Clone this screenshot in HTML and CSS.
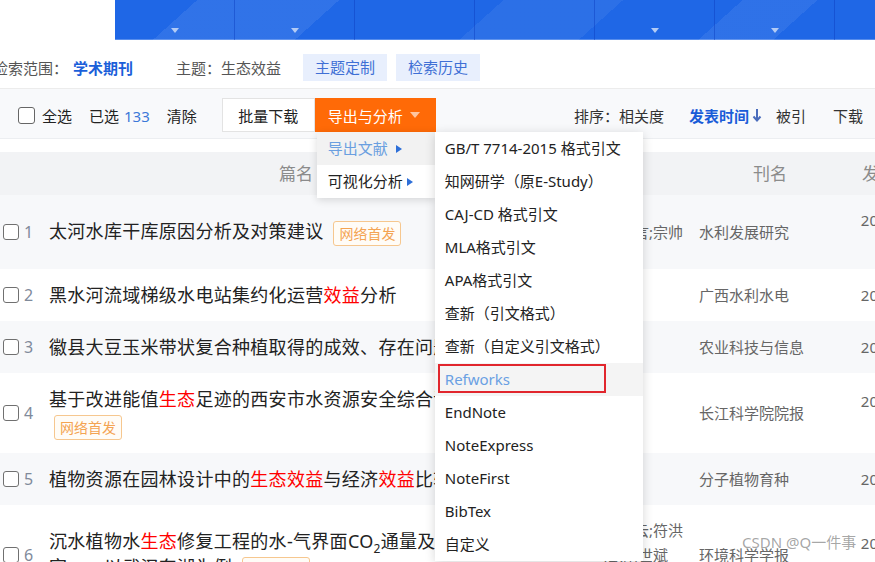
FILE: index.html
```html
<!DOCTYPE html>
<html lang="zh-CN">
<head>
<meta charset="utf-8">
<title>检索结果</title>
<link rel="stylesheet" href="styles.css">
</head>
<body>
<div class="topnav">
  <div class="seg"><span class="caret"></span></div>
  <div class="seg"><span class="caret"></span></div>
  <div class="seg"></div>
  <div class="seg"></div>
  <div class="seg"><span class="caret"></span></div>
  <div class="seg"><span class="caret"></span></div>
  <div class="seg"></div>
</div>

<div class="search-row">
  <span class="label">检索范围：</span><span class="scope">学术期刊</span>
  <span class="topic">主题：生态效益</span>
  <span class="chip">主题定制</span>
  <span class="chip chip-2">检索历史</span>
</div>

<div class="toolbar">
  <span class="cb"></span><span class="selall">全选</span>
  <span class="sel">已选<span class="count">133</span></span>
  <span class="clear">清除</span>
  <span class="btn-batch">批量下载</span>
  <div class="btn-export">
    <span>导出与分析</span>
    <svg class="exp-caret" width="10" height="6" viewBox="0 0 10 6"><path d="M0 0H10L5 6Z" fill="rgba(255,255,255,0.62)"/></svg>
    <div class="menu1">
      <div class="m1-item active">导出文献 <span class="tri"></span>
        <div class="menu2">
          <div class="m2-item">GB/T 7714-2015 格式引文</div>
          <div class="m2-item">知网研学（原E-Study）</div>
          <div class="m2-item">CAJ-CD 格式引文</div>
          <div class="m2-item">MLA格式引文</div>
          <div class="m2-item">APA格式引文</div>
          <div class="m2-item">查新（引文格式）</div>
          <div class="m2-item">查新（自定义引文格式）</div>
          <div class="m2-item hover">Refworks<span class="mark"></span></div>
          <div class="m2-item">EndNote</div>
          <div class="m2-item">NoteExpress</div>
          <div class="m2-item">NoteFirst</div>
          <div class="m2-item">BibTex</div>
          <div class="m2-item">自定义</div>
        </div>
      </div>
      <div class="m1-item">可视化分析<span class="tri"></span></div>
    </div>
  </div>
  <div class="sort">
    <span>排序：相关度</span>
    <span class="sort-on">发表时间</span>
    <svg class="sort-arrow" width="10" height="14" viewBox="0 0 10 14"><path d="M5 1V12M1.5 8.5L5 12.5L8.5 8.5" fill="none" stroke="#4a6cbc" stroke-width="2"/></svg>
    <span class="sort-cite">被引</span>
    <span class="sort-dl">下载</span>
  </div>
</div>

<div class="table">
  <div class="thead">
    <div></div>
    <div class="th-title">篇名</div>
    <div></div>
    <div class="th-journal">刊名</div>
    <div class="th-date">发表时间</div>
  </div>

  <div class="row alt">
    <div class="c-check"><span class="cb cb-row"></span><span class="num">1</span></div>
    <div class="c-title">太河水库干库原因分析及对策建议 <span class="tag">网络首发</span></div>
    <div class="c-author"><span class="au">李可言</span><span class="au">;宗帅</span></div>
    <div class="c-journal">水利发展研究</div>
    <div class="c-date">2023-03-06 15:20</div>
  </div>

  <div class="row">
    <div class="c-check"><span class="cb cb-row"></span><span class="num">2</span></div>
    <div class="c-title">黑水河流域梯级水电站集约化运营<em class="hl">效益</em>分析</div>
    <div class="c-author"><span class="au">王强</span></div>
    <div class="c-journal">广西水利水电</div>
    <div class="c-date">2023-03-01</div>
  </div>

  <div class="row alt">
    <div class="c-check"><span class="cb cb-row"></span><span class="num">3</span></div>
    <div class="c-title">徽县大豆玉米带状复合种植取得的成效、存在问题及建议</div>
    <div class="c-author"><span class="au">李娜</span></div>
    <div class="c-journal">农业科技与信息</div>
    <div class="c-date">2023-02-28</div>
  </div>

  <div class="row">
    <div class="c-check"><span class="cb cb-row"></span><span class="num">4</span></div>
    <div class="c-title">基于改进能值<em class="hl">生态</em>足迹的西安市水资源安全综合评价及预测 <span class="tag">网络首发</span></div>
    <div class="c-author"><span class="au">刘洋</span></div>
    <div class="c-journal">长江科学院院报</div>
    <div class="c-date">2023-02-27 16:08</div>
  </div>

  <div class="row alt">
    <div class="c-check"><span class="cb cb-row"></span><span class="num">5</span></div>
    <div class="c-title">植物资源在园林设计中的<em class="hl">生态效益</em>与经济<em class="hl">效益</em>比较分析</div>
    <div class="c-author"><span class="au">陈静</span></div>
    <div class="c-journal">分子植物育种</div>
    <div class="c-date">2023-02-25</div>
  </div>

  <div class="row">
    <div class="c-check"><span class="cb cb-row"></span><span class="num">6</span></div>
    <div class="c-title">沉水植物水<em class="hl">生态</em>修复工程的水-气界面CO<sub>2</sub>通量及其影响因素研究——以武汉东湖为例 <span class="tag">网络首发</span></div>
    <div class="c-author"><span class="au">张德云</span><span class="au">;符洪</span><span class="au">;欧阳世斌</span><span class="au">;王强</span></div>
    <div class="c-journal">环境科学学报</div>
    <div class="c-date">2023-02-24 10:35</div>
  </div>
</div>

<div class="watermark">CSDN @Q一件事</div>
</body>
</html>
```

FILE: styles.css
```css
html, body {
  margin: 0;
  padding: 0;
  overflow: hidden;
}
body {
  width: 875px;
  height: 562px;
  position: relative;
  background: #fff;
  color: #222;
  font-family: "Noto Sans", "Noto Sans CJK SC", sans-serif;
}

/* top blue navigation */
.topnav {
  margin-left: 115px;
  height: 40px;
  display: flex;
  background-color: #1f67e6;
  background-image: linear-gradient(138deg,
    rgba(255,255,255,0) 0 55px,
    rgba(255,255,255,0.08) 55px 150px,
    rgba(255,255,255,0) 150px 260px,
    rgba(255,255,255,0.06) 260px 340px,
    rgba(255,255,255,0) 340px 420px,
    rgba(255,255,255,0.07) 420px 470px,
    rgba(255,255,255,0) 470px);
  box-shadow: inset 0 -1px 0 rgba(255,255,255,0.25);
}
.seg {
  flex: 0 0 120px;
  box-sizing: border-box;
  border-right: 1px solid rgba(10, 60, 190, 0.45);
  display: flex;
  justify-content: center;
  align-items: flex-end;
  padding-bottom: 7px;
}
.caret {
  width: 0;
  height: 0;
  border-left: 4.5px solid transparent;
  border-right: 4.5px solid transparent;
  border-top: 5px solid #b3cbf5;
}

/* search scope row */
.search-row {
  display: flex;
  align-items: center;
  margin-left: -7px;
  padding: 14px 0 7px;
  height: 27px;
  border-bottom: 1px solid #ececec;
  font-size: 15px;
}
.label { color: #555; }
.scope {
  margin-left: 5px;
  color: #1b5fd9;
  font-weight: bold;
}
.topic {
  margin-left: 43px;
  color: #555;
}
.chip {
  margin-left: 22px;
  padding: 0 12px;
  line-height: 27px;
  background: #e8effd;
  color: #3f6fd5;
}
.chip-2 { margin-left: 9px; }

/* toolbar */
.toolbar {
  display: flex;
  align-items: center;
  height: 34px;
  padding: 9px 12px 6px 18px;
  background: #f8f9fb;
  border-bottom: 1px solid #eceef1;
  font-size: 15px;
  color: #222;
}
.cb {
  display: inline-block;
  width: 17px;
  height: 17px;
  box-sizing: border-box;
  border: 1.5px solid #666;
  border-radius: 3px;
  background: #fff;
  flex: none;
}
.selall { margin-left: 7px; }
.sel { margin-left: 17px; }
.count {
  margin-left: 5px;
  color: #3c78d8;
}
.clear { margin-left: 17px; }
.btn-batch {
  margin-left: 25px;
  width: 93px;
  height: 34px;
  box-sizing: border-box;
  border: 1px solid #e3e3e3;
  background: #fff;
  display: flex;
  align-items: center;
  justify-content: center;
}
.btn-export {
  position: relative;
  width: 121px;
  height: 34px;
  box-sizing: border-box;
  padding-left: 13px;
  background: #ff6a07;
  color: #fff;
  display: flex;
  align-items: center;
}
.exp-caret { margin-left: 7px; }

/* dropdown menus */
.menu1 {
  position: absolute;
  top: 34px;
  left: 2px;
  width: 118px;
  background: #fff;
  box-shadow: 0 2px 8px rgba(0,0,0,0.14);
  z-index: 10;
}
.m1-item {
  position: relative;
  height: 33px;
  line-height: 33px;
  padding-left: 11px;
  color: #222;
  font-size: 15px;
}
.m1-item.active {
  background: #f2f2f2;
  color: #6a9fe0;
}
.tri {
  display: inline-block;
  width: 0;
  height: 0;
  margin-left: 4px;
  border-top: 4px solid transparent;
  border-bottom: 4px solid transparent;
  border-left: 6px solid #2d6fd8;
  vertical-align: 1px;
}
.menu2 {
  position: absolute;
  top: 0;
  left: 118px;
  width: 208px;
  background: #fff;
  box-shadow: 0 2px 10px rgba(0,0,0,0.16);
  z-index: 11;
}
.m2-item {
  position: relative;
  height: 33px;
  line-height: 33px;
  padding-left: 10px;
  font-size: 15px;
  color: #222;
  white-space: nowrap;
}
.m2-item.hover {
  background: #f4f4f4;
  color: #6aa0e3;
}
.mark {
  position: absolute;
  left: 3px;
  top: 1px;
  width: 168px;
  height: 29px;
  box-sizing: border-box;
  border: 2px solid #e1262d;
}

/* sort */
.sort {
  margin-left: auto;
  display: flex;
  align-items: center;
  color: #333;
}
.sort-on {
  margin-left: 25px;
  color: #1a5cd8;
  font-weight: bold;
}
.sort-arrow { margin-left: 3px; }
.sort-cite { margin-left: 14px; }
.sort-dl { margin-left: 27px; }

/* result table */
.table {
  margin-top: 13px;
  width: 945px;
}
.thead {
  display: grid;
  grid-template-columns: 49px 555px 95px 156px 90px;
  height: 43px;
  line-height: 43px;
  background: #f2f3f5;
  font-size: 17px;
  color: #8b8b8b;
}
.th-title { padding-left: 230px; }
.th-journal { padding-left: 54px; }
.th-date { padding-left: 7px; white-space: nowrap; }

.row {
  display: grid;
  grid-template-columns: 49px 555px 95px 156px 90px;
  align-items: center;
  padding: 13px 0;
  background: #fff;
}
.row.alt { background: #f7f8fa; }
.c-check {
  display: flex;
  align-items: center;
}
.cb-row {
  width: 16px;
  height: 16px;
  margin-left: 3px;
  border-color: #707070;
}
.num {
  margin-left: 5px;
  font-size: 16px;
  color: #808a9a;
}
.c-title {
  padding-right: 50px;
  font-size: 18px;
  line-height: 26px;
  letter-spacing: 0.3px;
  color: #222;
}
.c-title sub {
  font-size: 12px;
  line-height: 0;
}
.hl {
  font-style: normal;
  color: #f00;
}
.tag {
  display: inline-block;
  margin-left: 5px;
  padding: 0 5px;
  line-height: 23px;
  font-size: 14px;
  letter-spacing: 0;
  border: 1px solid #f6c78f;
  border-radius: 3px;
  background: #fffcf7;
  color: #f4a453;
  vertical-align: middle;
}
.c-author {
  padding-right: 9px;
  font-size: 15px;
  line-height: 25px;
  color: #666;
}
.au {
  display: inline-block;
  white-space: nowrap;
}
.c-journal {
  font-size: 15px;
  line-height: 26px;
  color: #666;
  white-space: nowrap;
}
.c-date {
  font-size: 15px;
  line-height: 24px;
  color: #666;
  text-align: center;
}

.watermark {
  position: absolute;
  left: 742px;
  top: 531px;
  font-size: 15px;
  color: rgba(90, 90, 90, 0.55);
  white-space: nowrap;
  z-index: 20;
}
```
